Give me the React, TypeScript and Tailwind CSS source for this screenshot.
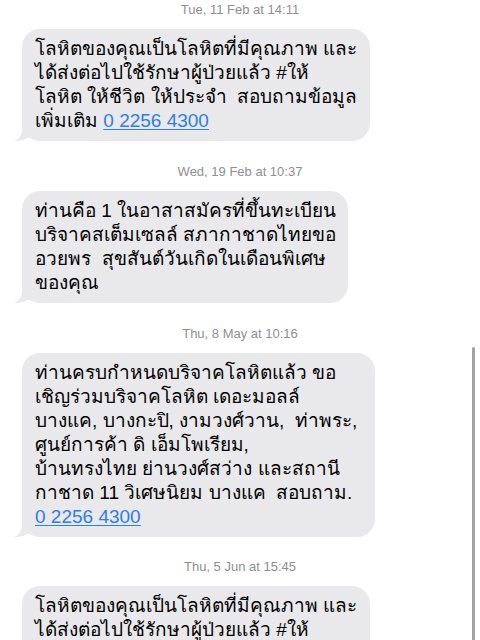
import React from "react";

const BLUE = "text-[#2f7de6]";

function Stamp({ children }: { children: React.ReactNode }) {
  return (
    <div className="text-center text-[13px] leading-[16px] text-[#8e8e93] font-['Liberation_Sans',sans-serif]">
      {children}
    </div>
  );
}

function Tail() {
  return (
    <svg className="absolute -left-[8px] bottom-0" width="22" height="20" viewBox="0 0 22 20">
      <path d="M8 0 V8 C8 14 5 18 0 20 C5 20.5 10 19 13.5 17 L22 17 V0 Z" fill="#e9e9eb" />
    </svg>
  );
}

function Bubble({ lines, width }: { lines: React.ReactNode[]; width: string }) {
  return (
    <div className={`relative ml-[22px] ${width}`}>
      <Tail />
      <div className="relative rounded-[18px] bg-[#e9e9eb] px-[13px] py-[8px] text-[19px] leading-[24px] text-black font-['Liberation_Sans','Noto_Sans',sans-serif]">
        {lines.map((l, i) => (
          <div key={i} className="whitespace-pre">
            {l}
          </div>
        ))}
      </div>
    </div>
  );
}

const Phone = () => <span className={`${BLUE} underline decoration-1 underline-offset-2`}>0 2256 4300</span>;

export default function App() {
  return (
    <div className="relative h-[640px] w-[480px] overflow-hidden bg-white">
      <div className="flex flex-col pt-[2px]">
        <Stamp>Tue, 11 Feb at 14:11</Stamp>
        <div className="mt-[11px]">
          <Bubble
            width="w-[348px]"
            lines={[
              "โลหิตของคุณเป็นโลหิตที่มีคุณภาพ และ",
              "ได้ส่งต่อไปใช้รักษาผู้ป่วยแล้ว #ให้",
              "โลหิต ให้ชีวิต ให้ประจำ  สอบถามข้อมูล",
              <>เพิ่มเติม <Phone /></>,
            ]}
          />
        </div>
        <div className="mt-[23px]">
          <Stamp>Wed, 19 Feb at 10:37</Stamp>
        </div>
        <div className="mt-[11px]">
          <Bubble
            width="w-[326px]"
            lines={[
              "ท่านคือ 1 ในอาสาสมัครที่ขึ้นทะเบียน",
              "บริจาคสเต็มเซลล์ สภากาชาดไทยขอ",
              "อวยพร  สุขสันต์วันเกิดในเดือนพิเศษ",
              "ของคุณ",
            ]}
          />
        </div>
        <div className="mt-[23px]">
          <Stamp>Thu, 8 May at 10:16</Stamp>
        </div>
        <div className="mt-[11px]">
          <Bubble
            width="w-[353px]"
            lines={[
              "ท่านครบกำหนดบริจาคโลหิตแล้ว ขอ",
              "เชิญร่วมบริจาคโลหิต เดอะมอลล์",
              "บางแค, บางกะปิ, งามวงศ์วาน,  ท่าพระ,",
              "ศูนย์การค้า ดิ เอ็มโพเรียม,",
              "บ้านทรงไทย ย่านวงศ์สว่าง และสถานี",
              "กาชาด 11 วิเศษนิยม บางแค  สอบถาม.",
              <Phone />,
            ]}
          />
        </div>
        <div className="mt-[22px]">
          <Stamp>Thu, 5 Jun at 15:45</Stamp>
        </div>
        <div className="mt-[11px]">
          <Bubble
            width="w-[348px]"
            lines={[
              "โลหิตของคุณเป็นโลหิตที่มีคุณภาพ และ",
              "ได้ส่งต่อไปใช้รักษาผู้ป่วยแล้ว #ให้",
              "โลหิต ให้ชีวิต ให้ประจำ  สอบถามข้อมูล",
              <>เพิ่มเติม <Phone /></>,
            ]}
          />
        </div>
      </div>
      <div className="absolute right-[5px] top-[347px] h-[300px] w-[3px] rounded-full bg-[#a3a3a3]" />
    </div>
  );
}
